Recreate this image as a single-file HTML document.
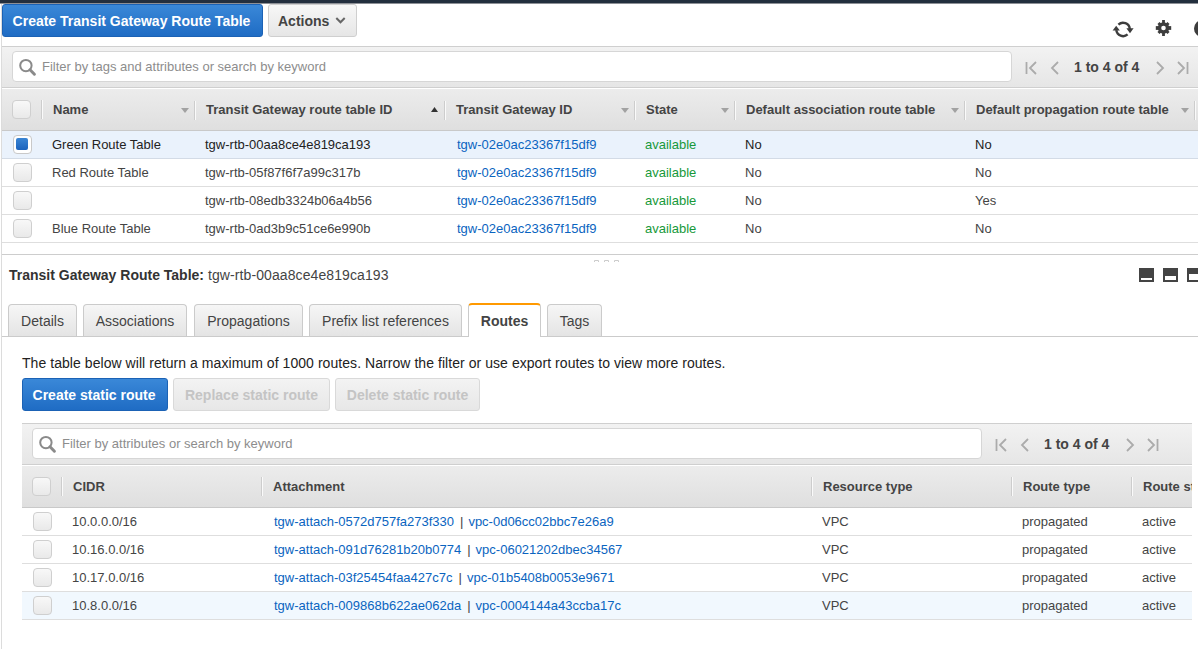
<!DOCTYPE html>
<html><head><meta charset="utf-8">
<style>
*{box-sizing:border-box;margin:0;padding:0}
html,body{width:1198px;height:649px;overflow:hidden;background:#fff;font-family:"Liberation Sans",sans-serif;color:#444;position:relative}
.a{position:absolute}
.topbar{left:0;top:0;width:1198px;height:3px;background:#232f3e}
.leftline{left:1px;top:47px;width:1px;height:602px;background:#d5d5d5}
.btnp{padding-right:2px;background:linear-gradient(#3a88d8,#1f6cc4);border:1px solid #1b62b5;border-radius:3px;color:#fff;font-weight:bold;font-size:14px;text-align:center}
.btng{background:linear-gradient(#f7f7f7,#e6e6e6);border:1px solid #cfcfcf;border-radius:3px;color:#444;font-weight:bold;font-size:14px}
.btnd{background:linear-gradient(#f3f3f3,#e7e7e7);border:1px solid #d9d9d9;border-radius:3px;color:#c4c4c4;font-weight:bold;font-size:14px;text-align:center}
.fbar{background:linear-gradient(#f2f2f2,#e6e6e6);border-top:1px solid #cfcfcf;border-bottom:1px solid #cfcfcf}
.inp{background:#fff;border:1px solid #d6d6d6;border-radius:4px}
.ph{font-size:13px;color:#8d8d8d;white-space:nowrap}
.thead{background:linear-gradient(#ececec,#dfdfdf);border-top:1px solid #fff;border-bottom:1px solid #c9c9c9}
.th{font-size:13px;font-weight:bold;color:#444;white-space:nowrap}
.sep{width:2px;height:19px;margin-left:-1px;border-left:1px solid #cdcdcd;border-right:1px solid #fafafa}
.cb{width:19px;height:19px;border:1px solid #cfcfcf;border-radius:4px;background:linear-gradient(#f8f8f8,#e9e9e9)}
.row{height:28px;border-bottom:1px solid #dedede}
.td{font-size:13px;color:#444;white-space:nowrap}
.lk{color:#0a64c0}
.gr{color:#17993a}
.pg{font-size:14px;font-weight:bold;color:#444;white-space:nowrap}
.tab{height:32px;border:1px solid #cbcbcb;border-bottom:none;border-radius:4px 4px 0 0;background:linear-gradient(#f6f6f6,#e4e4e4);font-size:14px;color:#444;text-align:center;line-height:33px}
</style></head><body>
<div class="a topbar"></div>
<div class="a" style="left:0;top:3px;width:1198px;height:1px;background:#8d9096"></div>
<div class="a" style="left:1px;top:4px;width:1px;height:645px;background:#dcdcdc"></div>

<!-- top toolbar -->
<div class="a btnp" style="left:2px;top:4px;width:261px;height:33px;line-height:33px">Create Transit Gateway Route Table</div>
<div class="a btng" style="left:268px;top:4px;width:89px;height:33px;line-height:32px;padding-left:9px">Actions</div>
<svg class="a" style="left:335px;top:16px" width="12" height="9" viewBox="0 0 12 9"><path d="M1.3 2 L5.5 6.3 L9.7 2" fill="none" stroke="#666" stroke-width="2"/></svg>

<!-- refresh icon -->
<svg class="a" style="left:1110px;top:18px" width="26" height="22" viewBox="0 0 26 22">
 <g fill="none" stroke="#3d3d3d" stroke-width="2.4">
 <path d="M8.4 6.6 A6.8 6.8 0 0 1 19.8 11"/>
 <path d="M17.6 16.4 A6.8 6.8 0 0 1 6.3 12.2"/>
 </g>
 <path d="M16.4 10.2 L23.6 10.2 L20 15.2 Z" fill="#3d3d3d"/>
 <path d="M2.6 12.6 L9.8 12.6 L6.2 7.8 Z" fill="#3d3d3d"/>
</svg>
<!-- gear -->
<svg class="a" style="left:1155px;top:20px" width="17" height="16" viewBox="0 0 17 16">
 <g fill="#3d3d3d">
 <rect x="7.1" y="0" width="2.8" height="16"/>
 <rect x="0.8" y="6.1" width="15.4" height="3.8"/>
 <rect x="7" y="0.9" width="3" height="14.2" transform="rotate(45 8.5 8)"/>
 <rect x="7" y="0.9" width="3" height="14.2" transform="rotate(-45 8.5 8)"/>
 <circle cx="8.5" cy="8" r="5.7"/>
 </g>
 <circle cx="8.5" cy="8" r="2.3" fill="#fff"/>
</svg>
<div class="a" style="left:1194px;top:20px;width:17px;height:17px;border-radius:50%;background:#3d3d3d"></div>

<!-- filter bar 1 -->
<div class="a fbar" style="left:2px;top:46px;width:1196px;height:42px"></div>
<div class="a inp" style="left:12px;top:51px;width:1000px;height:31px"></div>
<svg class="a" style="left:17px;top:56px" width="22" height="22" viewBox="0 0 22 22"><circle cx="8.9" cy="9.6" r="5.7" fill="none" stroke="#8a8a8a" stroke-width="2"/><path d="M13 13.8 L17.4 18.2" stroke="#8a8a8a" stroke-width="3" stroke-linecap="round"/></svg>
<div class="a ph" style="left:42px;top:59px">Filter by tags and attributes or search by keyword</div>
<svg class="a" style="left:1024px;top:61px" width="170" height="14" viewBox="0 0 170 14">
 <g fill="none" stroke="#ababab" stroke-width="1.8">
 <path d="M2.5 1 V13"/><path d="M12 1 L6 7 L12 13"/>
 <path d="M34 1 L28 7 L34 13"/>
 <path d="M133 1 L139 7 L133 13"/>
 <path d="M154 1 L160 7 L154 13"/><path d="M163.5 1 V13"/>
 </g>
</svg>
<div class="a pg" style="left:1074px;top:59px">1 to 4 of 4</div>

<!-- table 1 header -->
<div class="a thead" style="left:2px;top:88px;width:1196px;height:43px"></div>
<div class="a cb" style="left:12px;top:100px"></div>
<div class="a sep" style="left:42px;top:100px"></div>
<div class="a th" style="left:53px;top:102px">Name</div>
<svg class="a" style="left:181px;top:108px" width="8" height="5"><path d="M0 0 H8 L4 5 Z" fill="#a2a2a2"/></svg>
<div class="a sep" style="left:195px;top:101px"></div>
<div class="a th" style="left:206px;top:102px">Transit Gateway route table ID</div>
<svg class="a" style="left:431px;top:107px" width="8" height="6"><path d="M0 5 H7 L3.5 0 Z" fill="#333"/></svg>
<div class="a sep" style="left:445px;top:101px"></div>
<div class="a th" style="left:456px;top:102px">Transit Gateway ID</div>
<svg class="a" style="left:621px;top:108px" width="8" height="5"><path d="M0 0 H8 L4 5 Z" fill="#a2a2a2"/></svg>
<div class="a sep" style="left:635px;top:101px"></div>
<div class="a th" style="left:646px;top:102px">State</div>
<svg class="a" style="left:721px;top:108px" width="8" height="5"><path d="M0 0 H8 L4 5 Z" fill="#a2a2a2"/></svg>
<div class="a sep" style="left:735px;top:101px"></div>
<div class="a th" style="left:746px;top:102px">Default association route table</div>
<svg class="a" style="left:951px;top:108px" width="8" height="5"><path d="M0 0 H8 L4 5 Z" fill="#a2a2a2"/></svg>
<div class="a sep" style="left:965px;top:101px"></div>
<div class="a th" style="left:976px;top:102px">Default propagation route table</div>
<svg class="a" style="left:1181px;top:108px" width="8" height="5"><path d="M0 0 H8 L4 5 Z" fill="#a2a2a2"/></svg>
<div class="a sep" style="left:1195px;top:101px"></div>

<!-- table 1 rows -->
<div class="a row" style="left:2px;top:131px;width:1196px;background:#eaf2fc;border-bottom-color:#d3dbe6"></div>
<div class="a row" style="left:2px;top:159px;width:1196px"></div>
<div class="a row" style="left:2px;top:187px;width:1196px"></div>
<div class="a row" style="left:2px;top:215px;width:1196px"></div>

<div class="a cb" style="left:13px;top:135px;background:#fff;border-color:#c9c9c9"></div>
<div class="a" style="left:16px;top:138px;width:12px;height:12px;border-radius:2px;background:linear-gradient(#3a85d4,#1c63bd)"></div>
<div class="a cb" style="left:13px;top:163px"></div>
<div class="a cb" style="left:13px;top:191px"></div>
<div class="a cb" style="left:13px;top:219px"></div>

<div class="a td" style="left:52px;top:137px;color:#222">Green Route Table</div>
<div class="a td" style="left:205px;top:137px;color:#222">tgw-rtb-00aa8ce4e819ca193</div>
<div class="a td lk" style="left:457px;top:137px">tgw-02e0ac23367f15df9</div>
<div class="a td gr" style="left:645px;top:137px">available</div>
<div class="a td" style="left:745px;top:137px;color:#222">No</div>
<div class="a td" style="left:975px;top:137px;color:#222">No</div>

<div class="a td" style="left:52px;top:165px">Red Route Table</div>
<div class="a td" style="left:205px;top:165px">tgw-rtb-05f87f6f7a99c317b</div>
<div class="a td lk" style="left:457px;top:165px">tgw-02e0ac23367f15df9</div>
<div class="a td gr" style="left:645px;top:165px">available</div>
<div class="a td" style="left:745px;top:165px">No</div>
<div class="a td" style="left:975px;top:165px">No</div>

<div class="a td" style="left:205px;top:193px">tgw-rtb-08edb3324b06a4b56</div>
<div class="a td lk" style="left:457px;top:193px">tgw-02e0ac23367f15df9</div>
<div class="a td gr" style="left:645px;top:193px">available</div>
<div class="a td" style="left:745px;top:193px">No</div>
<div class="a td" style="left:975px;top:193px">Yes</div>

<div class="a td" style="left:52px;top:221px">Blue Route Table</div>
<div class="a td" style="left:205px;top:221px">tgw-rtb-0ad3b9c51ce6e990b</div>
<div class="a td lk" style="left:457px;top:221px">tgw-02e0ac23367f15df9</div>
<div class="a td gr" style="left:645px;top:221px">available</div>
<div class="a td" style="left:745px;top:221px">No</div>
<div class="a td" style="left:975px;top:221px">No</div>

<!-- splitter -->
<div class="a" style="left:2px;top:254px;width:1196px;height:1px;background:#cdcdcd"></div>

<svg class="a" style="left:591px;top:257px" width="30" height="7" viewBox="0 0 30 7"><g fill="none" stroke="#cccccc" stroke-width="1"><path d="M3.5 5 V3.5 H7.5 V5"/><path d="M13.5 5 V3.5 H17.5 V5"/><path d="M23.5 5 V3.5 H27.5 V5"/></g></svg>

<!-- details header -->
<div class="a" style="left:9px;top:267px;font-size:14px;white-space:nowrap;color:#444"><b style="color:#333">Transit Gateway Route Table:</b> <span style="letter-spacing:0.1px">tgw-rtb-00aa8ce4e819ca193</span></div>
<svg class="a" style="left:1139px;top:268px" width="59" height="14" viewBox="0 0 59 14">
 <g fill="#444">
  <path d="M0 0 H15 V14 H0 Z M2 10 V12 H13 V10 Z" fill-rule="evenodd"/>
  <path d="M24 0 H39 V14 H24 Z M26 8 V12 H37 V8 Z" fill-rule="evenodd"/>
  <path d="M48 0 H63 V14 H48 Z M50 6 V12 H61 V6 Z" fill-rule="evenodd"/>
 </g>
</svg>

<!-- tabs -->
<div class="a" style="left:2px;top:336px;width:1196px;height:1px;background:#cbcbcb"></div>
<div class="a tab" style="left:8px;top:304px;width:69px">Details</div>
<div class="a tab" style="left:83px;top:304px;width:104px">Associations</div>
<div class="a tab" style="left:194px;top:304px;width:109px">Propagations</div>
<div class="a tab" style="left:309px;top:304px;width:153px">Prefix list references</div>
<div class="a tab" style="left:468px;top:303px;width:73px;height:34px;background:#fff;border-top:2px solid #ff9900;font-weight:bold;color:#444;line-height:32px">Routes</div>
<div class="a tab" style="left:547px;top:304px;width:55px">Tags</div>

<div class="a" style="left:22px;top:355px;font-size:14px;color:#222;white-space:nowrap;letter-spacing:0.055px">The table below will return a maximum of 1000 routes. Narrow the filter or use export routes to view more routes.</div>

<div class="a btnp" style="left:22px;top:378px;width:146px;height:33px;line-height:33px">Create static route</div>
<div class="a btnd" style="left:173px;top:378px;width:157px;height:33px;line-height:33px">Replace static route</div>
<div class="a btnd" style="left:335px;top:378px;width:145px;height:33px;line-height:33px">Delete static route</div>

<!-- filter bar 2 -->
<div class="a fbar" style="left:22px;top:423px;width:1170px;height:42px"></div>
<div class="a inp" style="left:32px;top:428px;width:950px;height:31px"></div>
<svg class="a" style="left:37px;top:433px" width="22" height="22" viewBox="0 0 22 22"><circle cx="8.9" cy="9.6" r="5.7" fill="none" stroke="#8a8a8a" stroke-width="2"/><path d="M13 13.8 L17.4 18.2" stroke="#8a8a8a" stroke-width="3" stroke-linecap="round"/></svg>
<div class="a ph" style="left:62px;top:436px">Filter by attributes or search by keyword</div>
<svg class="a" style="left:994px;top:438px" width="170" height="14" viewBox="0 0 170 14">
 <g fill="none" stroke="#ababab" stroke-width="1.8">
 <path d="M2.5 1 V13"/><path d="M12 1 L6 7 L12 13"/>
 <path d="M34 1 L28 7 L34 13"/>
 <path d="M133 1 L139 7 L133 13"/>
 <path d="M154 1 L160 7 L154 13"/><path d="M163.5 1 V13"/>
 </g>
</svg>
<div class="a pg" style="left:1044px;top:436px">1 to 4 of 4</div>

<!-- table 2 header -->
<div class="a" style="left:22px;top:465px;width:1170px;height:43px;overflow:hidden">
 <div class="a thead" style="left:0;top:0;width:1170px;height:43px"></div>
 <div class="a cb" style="left:10px;top:12px"></div>
 <div class="a sep" style="left:40px;top:12px"></div>
 <div class="a th" style="left:51px;top:14px">CIDR</div>
 <div class="a sep" style="left:240px;top:12px"></div>
 <div class="a th" style="left:251px;top:14px">Attachment</div>
 <div class="a sep" style="left:790px;top:12px"></div>
 <div class="a th" style="left:801px;top:14px">Resource type</div>
 <div class="a sep" style="left:990px;top:12px"></div>
 <div class="a th" style="left:1001px;top:14px">Route type</div>
 <div class="a sep" style="left:1110px;top:12px"></div>
 <div class="a th" style="left:1121px;top:14px">Route status</div>
</div>

<!-- table 2 rows -->
<div class="a" style="left:22px;top:508px;width:1170px;height:112px;overflow:hidden">
 <div class="a row" style="left:0;top:0;width:1170px"></div>
 <div class="a row" style="left:0;top:28px;width:1170px"></div>
 <div class="a row" style="left:0;top:56px;width:1170px"></div>
 <div class="a row" style="left:0;top:84px;width:1170px;background:#f1f8fe"></div>

 <div class="a cb" style="left:11px;top:4px"></div>
 <div class="a cb" style="left:11px;top:32px"></div>
 <div class="a cb" style="left:11px;top:60px"></div>
 <div class="a cb" style="left:11px;top:88px"></div>

 <div class="a td" style="left:50px;top:6px">10.0.0.0/16</div>
 <div class="a td" style="left:252px;top:6px"><span class="lk">tgw-attach-0572d757fa273f330</span><span style="margin:0 5px 0 6px;color:#444">|</span><span class="lk">vpc-0d06cc02bbc7e26a9</span></div>
 <div class="a td" style="left:800px;top:6px">VPC</div>
 <div class="a td" style="left:1000px;top:6px">propagated</div>
 <div class="a td" style="left:1120px;top:6px">active</div>

 <div class="a td" style="left:50px;top:34px">10.16.0.0/16</div>
 <div class="a td" style="left:252px;top:34px"><span class="lk">tgw-attach-091d76281b20b0774</span><span style="margin:0 5px 0 6px;color:#444">|</span><span class="lk">vpc-06021202dbec34567</span></div>
 <div class="a td" style="left:800px;top:34px">VPC</div>
 <div class="a td" style="left:1000px;top:34px">propagated</div>
 <div class="a td" style="left:1120px;top:34px">active</div>

 <div class="a td" style="left:50px;top:62px">10.17.0.0/16</div>
 <div class="a td" style="left:252px;top:62px"><span class="lk">tgw-attach-03f25454faa427c7c</span><span style="margin:0 5px 0 6px;color:#444">|</span><span class="lk">vpc-01b5408b0053e9671</span></div>
 <div class="a td" style="left:800px;top:62px">VPC</div>
 <div class="a td" style="left:1000px;top:62px">propagated</div>
 <div class="a td" style="left:1120px;top:62px">active</div>

 <div class="a td" style="left:50px;top:90px">10.8.0.0/16</div>
 <div class="a td" style="left:252px;top:90px"><span class="lk">tgw-attach-009868b622ae062da</span><span style="margin:0 5px 0 6px;color:#444">|</span><span class="lk">vpc-0004144a43ccba17c</span></div>
 <div class="a td" style="left:800px;top:90px">VPC</div>
 <div class="a td" style="left:1000px;top:90px">propagated</div>
 <div class="a td" style="left:1120px;top:90px">active</div>
</div>
</body></html>
